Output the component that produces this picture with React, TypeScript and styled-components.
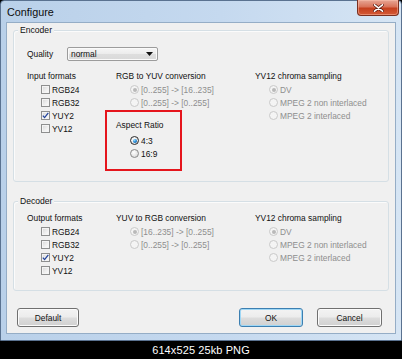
import React from "react";
import styled, { createGlobalStyle, css } from "styled-components";

const GlobalStyle = createGlobalStyle`
  html, body { margin: 0; padding: 0; background: #000; }
  body { font-family: "Liberation Sans", Arial, sans-serif; }
  * { box-sizing: border-box; }
`;

const FS = "8.4px";

const Page = styled.div`
  width: 402px;
  height: 359px;
  display: flex;
  flex-direction: column;
  overflow: hidden;
  background: #000;
`;

const Window = styled.div`
  height: 341px;
  display: flex;
  flex-direction: column;
  border: 1px solid #5a7290;
  border-radius: 4px 4px 0 0;
  background: linear-gradient(90deg, #b9d0e9 0%, #c5d9ef 55%, #d6e5f4 100%);
  padding: 0 5px 6px 5px;
`;

const TitleBar = styled.div`
  height: 21px;
  margin: 0 -5px;
  padding: 0 2px 0 6px;
  display: flex;
  align-items: flex-start;
  justify-content: space-between;
`;

const Title = styled.div`
  padding-top: 5px;
  font-size: 10.8px;
  line-height: 13px;
  color: #0d0d0d;
`;

const CloseButton = styled.div`
  width: 42px;
  height: 16px;
  margin-top: -1px;
  border: 1px solid #7a2f1f;
  border-top: none;
  border-radius: 0 0 4px 4px;
  background: linear-gradient(180deg, #e7a796 0%, #d9735a 45%, #c5401f 55%, #d45a36 100%);
  box-shadow: inset 0 0 0 1px rgba(255, 200, 180, 0.45);
  display: flex;
  align-items: center;
  justify-content: center;
`;

const Client = styled.div`
  flex: 1;
  background: #f0f0f0;
  border: 1px solid #95adc6;
  padding: 7px 6px 6px 6px;
  display: flex;
  flex-direction: column;
`;

const Group = styled.div<{ $top: number; $bottom: number; $mt?: number }>`
  position: relative;
  border: 1px solid #d5dfe5;
  border-radius: 3px;
  box-shadow: inset 1px 1px 0 #fbfbfb;
  padding: ${(p) => p.$top}px 12px ${(p) => p.$bottom}px 13px;
  margin-top: ${(p) => p.$mt ?? 0}px;
`;

const GroupTitle = styled.span`
  position: absolute;
  top: -6px;
  left: 4px;
  padding: 0 2px;
  background: #f0f0f0;
  font-size: 8.6px;
  line-height: 11px;
  color: #111;
`;

const QualityRow = styled.div`
  display: flex;
  align-items: center;
  height: 14px;
`;

const FieldLabel = styled.span`
  width: 40px;
  font-size: ${FS};
  color: #111;
`;

const Combo = styled.div`
  width: 91px;
  height: 14px;
  border: 1px solid #9c9c9c;
  border-radius: 2px;
  background: linear-gradient(180deg, #f6f6f6 0%, #ececec 48%, #dedede 52%, #d9d9d9 100%);
  box-shadow: inset 0 0 0 1px #fafafa;
  display: flex;
  align-items: center;
  justify-content: space-between;
  padding: 0 4px 0 3px;
  font-size: ${FS};
  color: #111;
`;

const Columns = styled.div<{ $mt: number }>`
  display: grid;
  grid-template-columns: 89px 139px 1fr;
  margin-top: ${(p) => p.$mt}px;
`;

const Column = styled.div`
  display: flex;
  flex-direction: column;
  align-items: flex-start;
`;

const Header = styled.div`
  height: 13px;
  line-height: 13px;
  font-size: ${FS};
  color: #111;
  white-space: nowrap;
`;

const Option = styled.div<{ $disabled?: boolean; $mt?: number }>`
  height: 13px;
  display: flex;
  align-items: center;
  gap: 2px;
  padding-left: 14px;
  margin-top: ${(p) => p.$mt ?? 0}px;
  font-size: ${FS};
  white-space: nowrap;
  color: ${(p) => (p.$disabled ? "#8e8e8e" : "#111")};
`;

const CheckBox = styled.span`
  width: 9px;
  height: 9px;
  flex: none;
  border: 1px solid #8e8f8f;
  background: linear-gradient(135deg, #d6d6d6 0%, #f0f0f0 60%, #fdfdfd 100%);
  box-shadow: inset 0 0 0 1px #f4f4f4;
  display: flex;
  align-items: center;
  justify-content: center;
`;

const Radio = styled.span<{ $checked?: boolean; $disabled?: boolean }>`
  width: 9px;
  height: 9px;
  flex: none;
  border-radius: 50%;
  display: flex;
  align-items: center;
  justify-content: center;
  ${(p) =>
    p.$disabled
      ? css`
          border: 1px solid #c9c9c9;
          background: #f4f4f4;
        `
      : css`
          border: 1px solid ${p.$checked ? "#2b2b2b" : "#8a8a8a"};
          background: radial-gradient(circle at 40% 35%, #ffffff 0%, #e9e9e9 50%, #cfcfcf 100%);
        `}
  &::after {
    content: "";
    display: ${(p) => (p.$checked ? "block" : "none")};
    width: 4px;
    height: 4px;
    border-radius: 50%;
    background: ${(p) =>
      p.$disabled
        ? "#b9b9b9"
        : "radial-gradient(circle at 35% 30%, #9fe0ff 0%, #2a8fd9 45%, #0f4f93 100%)"};
  }
`;

const RedBox = styled.div`
  margin: 1px 0 0 -11px;
  width: 77px;
  height: 61px;
  border: 2px solid #e5151c;
  padding: 7px 0 0 9px;
  display: flex;
  flex-direction: column;
`;

const ButtonRow = styled.div`
  margin-top: 17px;
  padding: 0 7px 0 4px;
  display: flex;
  align-items: center;
`;

const Button = styled.div<{ $w: number; $primary?: boolean; $push?: boolean; $ml?: number }>`
  width: ${(p) => p.$w}px;
  height: 19px;
  margin-left: ${(p) => (p.$push ? "auto" : `${p.$ml ?? 0}px`)};
  border: 1px solid ${(p) => (p.$primary ? "#3c7fb1" : "#707070")};
  border-radius: 3px;
  background: linear-gradient(180deg, #f3f3f3 0%, #ececec 48%, #dddddd 52%, #d0d0d0 100%);
  box-shadow: inset 0 0 0 1px ${(p) => (p.$primary ? "#9fd7f5" : "#fbfbfb")};
  display: flex;
  align-items: center;
  justify-content: center;
  font-size: ${FS};
  color: #111;
`;

const Caption = styled.div`
  flex: 1;
  display: flex;
  align-items: center;
  justify-content: center;
  color: #fff;
  font-size: 11px;
  letter-spacing: 0.1px;
`;

const Check = () => (
  <svg width="7" height="7" viewBox="0 0 7 7">
    <path d="M0.8 3.6 L2.6 5.6 L6.3 0.8" fill="none" stroke="#23449c" strokeWidth="1.3" />
  </svg>
);

const CloseX = () => (
  <svg width="11" height="8" viewBox="0 0 11 8">
    <path d="M1.5 0.8 L9.5 7.2 M9.5 0.8 L1.5 7.2" stroke="#5a1a10" strokeWidth="3" strokeLinecap="round" />
    <path d="M1.5 0.8 L9.5 7.2 M9.5 0.8 L1.5 7.2" stroke="#ffffff" strokeWidth="1.6" strokeLinecap="round" />
  </svg>
);

const Arrow = () => (
  <svg width="7" height="4" viewBox="0 0 7 4">
    <path d="M0 0 H7 L3.5 4 Z" fill="#111" />
  </svg>
);

type Fmt = { label: string; checked?: boolean };
const formats: Fmt[] = [
  { label: "RGB24" },
  { label: "RGB32" },
  { label: "YUY2", checked: true },
  { label: "YV12" },
];

const FormatColumn: React.FC<{ title: string }> = ({ title }) => (
  <Column>
    <Header>{title}</Header>
    {formats.map((f) => (
      <Option key={f.label}>
        <CheckBox>{f.checked && <Check />}</CheckBox>
        {f.label}
      </Option>
    ))}
  </Column>
);

const RadioColumn: React.FC<{ title: string; items: string[]; children?: React.ReactNode }> = ({
  title,
  items,
  children,
}) => (
  <Column>
    <Header>{title}</Header>
    {items.map((it, i) => (
      <Option key={it} $disabled>
        <Radio $disabled $checked={i === 0} />
        {it}
      </Option>
    ))}
    {children}
  </Column>
);

const chroma = ["DV", "MPEG 2 non interlaced", "MPEG 2 interlaced"];

export default function App() {
  return (
    <>
      <GlobalStyle />
      <Page>
        <Window>
          <TitleBar>
            <Title>Configure</Title>
            <CloseButton>
              <CloseX />
            </CloseButton>
          </TitleBar>
          <Client>
            <Group $top={16} $bottom={10}>
              <GroupTitle>Encoder</GroupTitle>
              <QualityRow>
                <FieldLabel>Quality</FieldLabel>
                <Combo>
                  normal
                  <Arrow />
                </Combo>
              </QualityRow>
              <Columns $mt={9}>
                <FormatColumn title="Input formats" />
                <RadioColumn
                  title="RGB to YUV conversion"
                  items={["[0..255] -> [16..235]", "[0..255] -> [0..255]"]}
                >
                  <RedBox>
                    <Header>Aspect Ratio</Header>
                    <Option $mt={2}>
                      <Radio $checked />
                      4:3
                    </Option>
                    <Option>
                      <Radio />
                      16:9
                    </Option>
                  </RedBox>
                </RadioColumn>
                <RadioColumn title="YV12 chroma sampling" items={chroma} />
              </Columns>
            </Group>
            <Group $top={10} $bottom={13} $mt={19}>
              <GroupTitle>Decoder</GroupTitle>
              <Columns $mt={0}>
                <FormatColumn title="Output formats" />
                <RadioColumn
                  title="YUV to RGB conversion"
                  items={["[16..235] -> [0..255]", "[0..255] -> [0..255]"]}
                />
                <RadioColumn title="YV12 chroma sampling" items={chroma} />
              </Columns>
            </Group>
            <ButtonRow>
              <Button $w={62}>Default</Button>
              <Button $w={64} $primary $push>
                OK
              </Button>
              <Button $w={65} $ml={14}>
                Cancel
              </Button>
            </ButtonRow>
          </Client>
        </Window>
        <Caption>614x525 25kb PNG</Caption>
      </Page>
    </>
  );
}
